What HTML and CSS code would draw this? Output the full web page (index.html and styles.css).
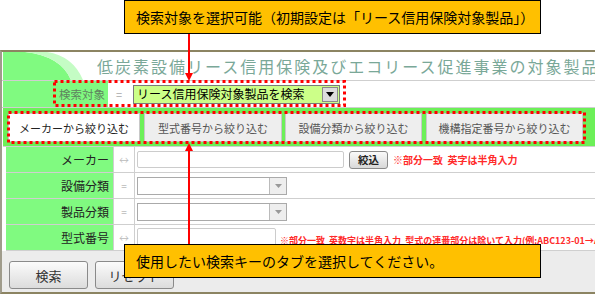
FILE: index.html
```html
<!DOCTYPE html>
<html lang="ja">
<head>
<meta charset="utf-8">
<title>検索</title>
<link rel="stylesheet" href="styles.css">
</head>
<body>
<div class="page">
  <div class="frame">
    <div class="title-row">
      <svg class="swoosh" width="80" height="28" viewBox="0 0 80 28">
        <path d="M0,0 L22,0 Q58,4 68,28 L0,28 Z" fill="#80fa80"/>
        <path d="M22,0 Q58,4 68,28 L80,28 Q70,4 44,0 Z" fill="#c4fcc4"/>
      </svg>
      <span class="title">低炭素設備リース信用保険及びエコリース促進事業の対象製品検索</span>
    </div>
    <div class="target-row">
      <div class="t-label">検索対象</div>
      <div class="t-eq">=</div>
      <div class="t-select">
        <span class="t-text">リース信用保険対象製品を検索</span>
        <span class="t-btn"><svg width="8" height="5" viewBox="0 0 8 5"><path d="M0,0 L8,0 L4,5 Z" fill="#000"/></svg></span>
      </div>
    </div>
    <div class="tab-strip">
      <div class="tab tab-active tab-1">メーカーから絞り込む</div>
      <div class="tab tab-2">型式番号から絞り込む</div>
      <div class="tab tab-3">設備分類から絞り込む</div>
      <div class="tab tab-4">機構指定番号から絞り込む</div>
    </div>
    <div class="form">
      <div class="row">
        <div class="lbl">メーカー</div>
        <div class="sym">↔</div>
        <div class="val">
          <div class="input input-maker"></div>
          <div class="btn-small">絞込</div>
          <span class="note">※部分一致&nbsp;&nbsp;英字は半角入力</span>
        </div>
      </div>
      <div class="row">
        <div class="lbl">設備分類</div>
        <div class="sym">=</div>
        <div class="val">
          <div class="select"><span class="select-btn"><svg width="7" height="4" viewBox="0 0 7 4"><path d="M0,0 L7,0 L3.5,4 Z" fill="#999"/></svg></span></div>
        </div>
      </div>
      <div class="row">
        <div class="lbl">製品分類</div>
        <div class="sym">=</div>
        <div class="val">
          <div class="select"><span class="select-btn"><svg width="7" height="4" viewBox="0 0 7 4"><path d="M0,0 L7,0 L3.5,4 Z" fill="#999"/></svg></span></div>
        </div>
      </div>
      <div class="row row-last">
        <div class="lbl">型式番号</div>
        <div class="sym">↔</div>
        <div class="val">
          <div class="input input-model"></div>
          <span class="note note-small">※部分一致&nbsp;&nbsp;英数字は半角入力&nbsp;&nbsp;型式の連番部分は除いて入力(例:ABC123-01→ABC123)</span>
        </div>
      </div>
    </div>
    <div class="bottom">
      <div class="btn">検索</div>
      <div class="btn">リセット</div>
    </div>
  </div>

  <svg class="marks" width="595" height="294" viewBox="0 0 595 294">
    <rect x="54.5" y="81.5" width="290" height="24" fill="none" stroke="#ff0000" stroke-width="3" stroke-dasharray="3 3"/>
    <rect x="8.5" y="112.5" width="576" height="30" fill="none" stroke="#ff0000" stroke-width="3" stroke-dasharray="3 3"/>
    <line x1="189" y1="34" x2="189" y2="74" stroke="#ff0000" stroke-width="2"/>
    <path d="M185,73 L193,73 L189,81 Z" fill="#ff0000"/>
    <line x1="189" y1="244" x2="189" y2="150" stroke="#ff0000" stroke-width="2"/>
    <path d="M185,151 L193,151 L189,143 Z" fill="#ff0000"/>
  </svg>

  <div class="callout callout-top">検索対象を選択可能（初期設定は「リース信用保険対象製品」）</div>
  <div class="callout callout-bottom">使用したい検索キーのタブを選択してください。</div>
</div>
</body>
</html>
```

FILE: styles.css
```css
* { box-sizing: border-box; }

html, body {
  margin: 0;
  padding: 0;
  background: #ffffff;
}

body {
  font-family: "Noto Sans CJK JP", "Noto Sans", sans-serif;
  color: #222;
}

.page {
  position: relative;
  width: 595px;
  height: 294px;
  overflow: hidden;
  padding-top: 50px;
}

.frame {
  width: 595px;
  height: 244px;
  border-top: 2px solid #8c8462;
  border-bottom: 2px solid #8c8462;
  border-left: 2px solid #a09c8c;
  background: #ffffff;
  display: flex;
  flex-direction: column;
  overflow: hidden;
}

/* title */
.title-row {
  height: 29px;
  flex: none;
  border-bottom: 1px solid #cfcfcf;
  padding-left: 1px;
  display: flex;
  align-items: center;
  white-space: nowrap;
  overflow: hidden;
}

.swoosh {
  flex: none;
  align-self: flex-start;
}

.title {
  margin-left: 14px;
  font-size: 16px;
  letter-spacing: 2px;
  color: #7aa898;
  line-height: 1;
}

/* search target row */
.target-row {
  height: 27px;
  flex: none;
  border-bottom: 1px solid #cfcfcf;
  padding-left: 1px;
  display: flex;
  align-items: center;
}

.t-label {
  width: 105px;
  height: 100%;
  background: #80fa80;
  color: #5f835f;
  font-size: 11.5px;
  text-align: right;
  padding-right: 3px;
  display: flex;
  align-items: center;
  justify-content: flex-end;
}

.t-eq {
  width: 22px;
  text-align: center;
  font-size: 11px;
  color: #aaaaaa;
  margin-right: 3px;
}

.t-select {
  width: 207px;
  height: 19px;
  background: #ccff88;
  border: 1px solid #7a7a7a;
  display: flex;
  align-items: center;
  justify-content: space-between;
  padding-left: 3px;
  padding-right: 1px;
}

.t-text {
  font-size: 12px;
  color: #000;
  line-height: 1;
  white-space: nowrap;
}

.t-btn {
  width: 16px;
  height: 15px;
  background: #dcdcdc;
  border: 1px solid #8a8a8a;
  display: flex;
  align-items: center;
  justify-content: center;
}

.t-btn svg, .select-btn svg { display: block; }

/* tabs */
.tab-strip {
  height: 39px;
  flex: none;
  margin-left: 1px;
  background: #6cf058;
  border-bottom: 1px solid #cfcfcf;
  padding: 5px 0 4px 5px;
  display: flex;
  white-space: nowrap;
}

.tab {
  height: 29px;
  background: #eeeeee;
  border: 1px solid #c8c8c8;
  font-size: 11px;
  color: #555555;
  display: flex;
  align-items: center;
  justify-content: center;
  flex: none;
}

.tab-active {
  background: #ffffff;
  color: #222222;
}

.tab-1 { width: 132px; }
.tab-2 { width: 138px; margin-left: 4px; }
.tab-3 { width: 137px; margin-left: 3px; }
.tab-4 { width: 157px; margin-left: 4px; }

/* form */
.form {
  flex: none;
  padding-left: 4px;
}

.row {
  height: 26px;
  border-bottom: 1px solid #cfcfcf;
  display: flex;
}

.lbl {
  width: 108px;
  background: #80fa80;
  border-right: 1px solid #cfcfcf;
  font-size: 12px;
  color: #222222;
  display: flex;
  align-items: center;
  justify-content: flex-end;
  padding-right: 4px;
}

.sym {
  width: 21px;
  border-right: 1px solid #cfcfcf;
  font-size: 10px;
  color: #bbbbbb;
  display: flex;
  align-items: center;
  justify-content: center;
}

.val {
  flex: 1;
  display: flex;
  align-items: center;
  padding-left: 2px;
  white-space: nowrap;
  overflow: hidden;
}

.input {
  height: 17px;
  border: 1px solid #cccccc;
  border-radius: 2px;
  background: #fff;
  flex: none;
}

.input-maker { width: 207px; }

.input-model {
  width: 139px;
  height: 20px;
}

.btn-small {
  width: 39px;
  height: 18px;
  margin-left: 5px;
  border: 1px solid #8a8a8a;
  border-radius: 3px;
  background: linear-gradient(#fafafa, #d8d8d8);
  font-size: 10.5px;
  font-weight: bold;
  color: #222;
  display: flex;
  align-items: center;
  justify-content: center;
  flex: none;
}

.note {
  margin-left: 5px;
  font-size: 10px;
  font-weight: bold;
  color: #ff2a2a;
  line-height: 1;
}

.note-small {
  margin-left: 4px;
  font-size: 9px;
  font-weight: bold;
  align-self: flex-end;
  margin-bottom: 5px;
}

.select {
  width: 150px;
  height: 18px;
  border: 1px solid #aaaaaa;
  background: #fff;
  display: flex;
  justify-content: flex-end;
}

.select-btn {
  width: 17px;
  height: 100%;
  background: #eeeeee;
  border-left: 1px solid #bbbbbb;
  display: flex;
  align-items: center;
  justify-content: center;
}

/* bottom buttons */
.bottom {
  flex: 1;
  background: #ececec;
  padding: 10px 0 0 7px;
  display: flex;
  gap: 7px;
}

.btn {
  width: 79px;
  height: 28px;
  border: 1px solid #8a8a8a;
  border-radius: 3px;
  background: linear-gradient(#fbfbfb, #dcdcdc);
  font-size: 13px;
  color: #333;
  display: flex;
  align-items: center;
  justify-content: center;
}

/* annotations */
.marks {
  position: absolute;
  left: 0;
  top: 0;
  pointer-events: none;
}

.callout {
  position: absolute;
  left: 124px;
  width: 417px;
  height: 34px;
  background: #ffc000;
  border: 1px solid #000;
  font-size: 14px;
  color: #000;
  padding-left: 11px;
  display: flex;
  align-items: center;
  white-space: nowrap;
}

.callout-top { top: 0; }
.callout-bottom { top: 244px; }
```
